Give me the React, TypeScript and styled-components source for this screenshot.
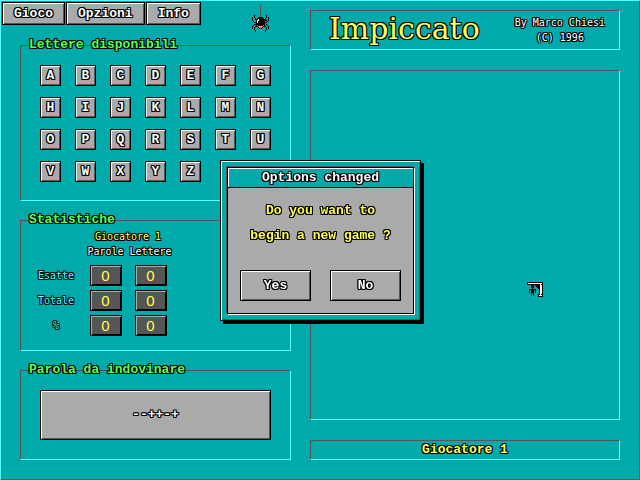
import React from "react";
import styled, { createGlobalStyle, css } from "styled-components";

const teal = "#00aaaa";
const aqua = "#55ffff";
const gray = "#aaaaaa";
const dark = "#555555";
const yellow = "#ffff55";
const green = "#55ff55";

const outline = css`
  text-shadow: -1px -1px #000, 0 -1px #000, 1px -1px #000, -1px 0 #000, 1px 0 #000,
    -1px 1px #000, 0 1px #000, 1px 1px #000;
`;

const boldText = css`
  font: bold 13px/16px "Liberation Mono", monospace;
  ${outline}
`;

const smallText = css`
  font: 10px/15px "DejaVu Sans Mono", monospace;
  ${outline}
`;

const GlobalStyle = createGlobalStyle`
  * { box-sizing: border-box; }
  body { margin: 0; background: ${teal}; }
  h1, h2, p { margin: 0; }
`;

const Screen = styled.div`
  display: grid;
  grid-template-columns: minmax(0, 290fr) minmax(0, 348fr);
  min-height: 100vh;
  background: ${teal};
  color: #fff;
  border: 1px solid;
  border-color: ${aqua} ${dark} ${dark} ${aqua};
`;

const LeftColumn = styled.div`
  display: flex;
  flex-direction: column;
  padding-bottom: 19px;
`;

const RightColumn = styled.div`
  display: flex;
  flex-direction: column;
  gap: 20px;
  padding: 9px 19px 19px;
`;

const TopBar = styled.header`
  display: flex;
  align-items: flex-start;
  height: 44px;
  padding: 1px;
`;

const MenuBar = styled.nav`
  display: flex;
  gap: 1px;
`;

const RaisedButton = styled.button`
  ${boldText}
  display: flex;
  align-items: center;
  justify-content: center;
  padding: 0;
  color: #fff;
  background: ${gray};
  border: 1px solid #000;
  border-radius: 0;
  box-shadow: inset 1px 1px #fff, inset -1px -1px ${dark};
`;

const MenuButton = styled(RaisedButton)`
  height: 23px;
  padding: 0 11px;
`;

const Spider = styled.svg`
  flex: none;
  margin: 3px 0 0 51px;
`;

const Panel = styled.section`
  border: 1px solid;
  border-color: ${dark} ${aqua} ${aqua} ${dark};
`;

const Group = styled(Panel)`
  margin-left: 19px;
`;

const LettersGroup = styled(Group)`
  min-height: 156px;
  margin-bottom: 19px;
`;

const StatsGroup = styled(Group)`
  min-height: 131px;
  margin-bottom: 19px;
`;

const WordGroup = styled(Group)`
  flex: 1;
  display: flex;
  flex-direction: column;
`;

const GroupTitle = styled.h2`
  ${boldText}
  margin: -9px 0 0 8px;
  color: ${green};
`;

const Letters = styled.div`
  display: grid;
  grid-template-columns: repeat(7, 21px);
  gap: 11px 14px;
  margin: 12px 0 0 19px;
`;

const LetterButton = styled(RaisedButton)`
  width: 21px;
  height: 21px;
`;

const Stats = styled.table`
  ${smallText}
  margin: 1px 0 0 8px;
  border-spacing: 0;
  text-align: center;

  th, td { padding: 0; font-weight: normal; }
  thead tr:last-child { height: 19px; vertical-align: top; }
  tbody tr { height: 25px; }
  tbody th { width: 54px; color: ${aqua}; }
  td { width: 45px; }
`;

const PlayerHead = styled.th`
  color: ${yellow};
`;

const Count = styled.output`
  display: block;
  width: 32px;
  height: 21px;
  margin: 0 auto;
  font: 15px/19px "Liberation Sans", sans-serif;
  text-shadow: none;
  color: ${yellow};
  background: ${dark};
  border: 1px solid #000;
  box-shadow: inset 1px 1px ${gray}, inset -1px -1px #000;
`;

const WordButton = styled(RaisedButton)`
  flex: 1;
  margin: 12px 19px 19px;
`;

const TitlePanel = styled(Panel)`
  display: flex;
  align-items: center;
  justify-content: space-between;
  height: 40px;
  padding: 0 14px 0 18px;
`;

const Title = styled.h1`
  font: 30px/36px "DejaVu Serif", serif;
  padding-bottom: 2px;
  color: ${yellow};
  ${outline}
`;

const Credit = styled.p`
  ${smallText}
  text-align: center;
`;

const Board = styled(Panel)`
  flex: 1;
  display: grid;
  place-items: center;
  padding: 88px 0 0 140px;
`;

const PlayerPanel = styled(Panel)`
  ${boldText}
  line-height: 18px;
  color: ${yellow};
  text-align: center;
`;

const Overlay = styled.div`
  position: fixed;
  inset: 0;
  display: grid;
  place-items: center;
  padding: 1px 0 0 1px;
`;

const Dialog = styled.div`
  width: 201px;
  padding: 6px;
  background: ${teal};
  border: 1px solid #000;
  box-shadow: inset 1px 1px #fff, inset -1px -1px ${dark}, 3px 3px #000;
`;

const DialogInner = styled.div`
  background: ${gray};
  border: 1px solid #000;
  box-shadow: -1px -1px ${dark}, 1px 1px #fff;
`;

const DialogTitle = styled.h2`
  ${boldText}
  line-height: 19px;
  color: #fff;
  text-align: center;
  background: ${teal};
  border-bottom: 1px solid #000;
  box-shadow: inset 1px 1px #fff;
`;

const Message = styled.p`
  ${boldText}
  line-height: 25px;
  padding: 10px 0 22px;
  color: ${yellow};
  text-align: center;
`;

const Choices = styled.div`
  display: flex;
  justify-content: space-between;
  padding: 0 12px 12px;
`;

const ChoiceButton = styled(RaisedButton)`
  width: 71px;
  height: 31px;
`;

const spiderPixels = [
  "..#...........#..",
  "..#...........#..",
  "#.#...#####...#.#",
  "#..#.#######.#..#",
  "#..###w#######..#",
  "#...#ww########.#",
  ".#..#w#######..#.",
  "..###w#########..",
  "....#########....",
  "..###########.#..",
  ".#..#r#####r#..#.",
  "#..###rwrwr###..#",
  "#.#...#rrr#...#.#",
  "#.#....#r#....#.#",
  "..#...........#..",
  "...#.........#...",
  "...#.........#...",
];

const inks: Record<string, string> = { "#": "#000", w: "#fff", r: "#ff5555" };

function SpiderIcon() {
  return (
    <Spider width="17" height="27" viewBox="0 0 17 27" shapeRendering="crispEdges" aria-hidden="true">
      <path d="M8 0h1v12h-1z" fill={dark} />
      {spiderPixels.flatMap((line, y) =>
        line.split("").map((ink, x) =>
          inks[ink] ? (
            <rect key={`${x}-${y}`} x={x} y={y + 10} width="1" height="1" fill={inks[ink]} />
          ) : null
        )
      )}
    </Spider>
  );
}

function Gallows() {
  return (
    <svg width="16" height="15" viewBox="0 0 16 15" shapeRendering="crispEdges" aria-hidden="true">
      <path d="M0 0h16v12h0v3h-5v-3h1V7h-1V6h-1V5h-1V4h-1V3H0z" fill="#000" />
      <path d="M1 1h14v1H1zM13 2h1v11h-1zM12 13h3v1h-3z" fill="#fff" />
      <path d="M14 3h1v9h-1z" fill="#fff" />
      <path d="M4 3h3v3h-1v1h3v4h-1V8h-1v6h-1v-3h-1v3h-1V8h-1v3h-1V7h3V6h-1z" fill="#000" />
    </svg>
  );
}

const letters = "ABCDEFGHIJKLMNOPQRSTUVWXYZ".split("");
const rows = ["Esatte", "Totale", "%"];

export default function App() {
  return (
    <>
      <GlobalStyle />
      <Screen>
        <LeftColumn>
          <TopBar>
            <MenuBar>
              <MenuButton>Gioco</MenuButton>
              <MenuButton>Opzioni</MenuButton>
              <MenuButton>Info</MenuButton>
            </MenuBar>
            <SpiderIcon />
          </TopBar>
          <LettersGroup>
            <GroupTitle>Lettere disponibili</GroupTitle>
            <Letters>
              {letters.map((letter) => (
                <LetterButton key={letter}>{letter}</LetterButton>
              ))}
            </Letters>
          </LettersGroup>
          <StatsGroup>
            <GroupTitle>Statistiche</GroupTitle>
            <Stats>
              <thead>
                <tr>
                  <td />
                  <PlayerHead colSpan={2} scope="colgroup">Giocatore 1</PlayerHead>
                </tr>
                <tr>
                  <td />
                  <th scope="col">Parole</th>
                  <th scope="col">Lettere</th>
                </tr>
              </thead>
              <tbody>
                {rows.map((row) => (
                  <tr key={row}>
                    <th scope="row">{row}</th>
                    <td><Count>0</Count></td>
                    <td><Count>0</Count></td>
                  </tr>
                ))}
              </tbody>
            </Stats>
          </StatsGroup>
          <WordGroup>
            <GroupTitle>Parola da indovinare</GroupTitle>
            <WordButton>--++-+</WordButton>
          </WordGroup>
        </LeftColumn>
        <RightColumn>
          <TitlePanel>
            <Title>Impiccato</Title>
            <Credit>
              By Marco Chiesi
              <br />
              (C) 1996
            </Credit>
          </TitlePanel>
          <Board>
            <Gallows />
          </Board>
          <PlayerPanel>Giocatore 1</PlayerPanel>
        </RightColumn>
      </Screen>
      <Overlay>
        <Dialog role="dialog" aria-modal="true" aria-labelledby="dialog-title">
          <DialogInner>
            <DialogTitle id="dialog-title">Options changed</DialogTitle>
            <Message>
              Do you want to
              <br />
              begin a new game ?
            </Message>
            <Choices>
              <ChoiceButton>Yes</ChoiceButton>
              <ChoiceButton>No</ChoiceButton>
            </Choices>
          </DialogInner>
        </Dialog>
      </Overlay>
    </>
  );
}
